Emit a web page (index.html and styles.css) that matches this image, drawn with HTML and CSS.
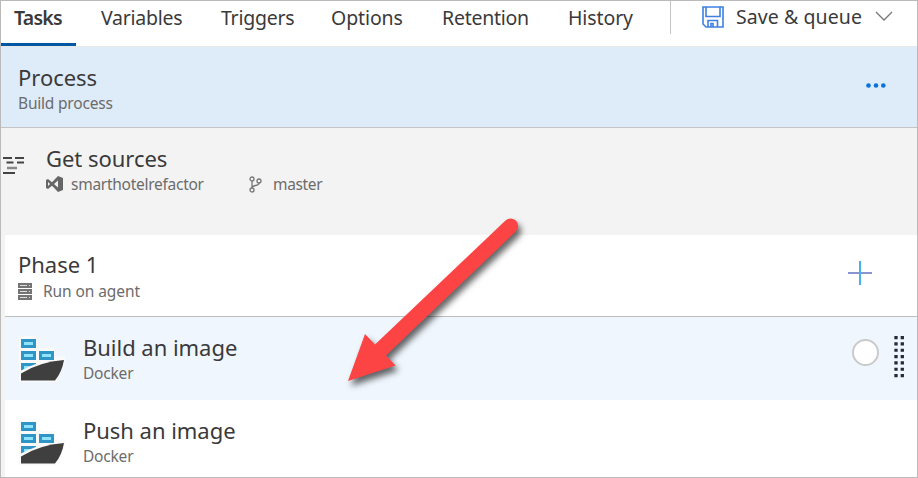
FILE: index.html
```html
<!DOCTYPE html>
<html lang="en">
<head>
<meta charset="utf-8">
<title>Build definition</title>
<link rel="stylesheet" href="styles.css">
</head>
<body>
<svg class="defs" width="0" height="0" aria-hidden="true">
  <symbol id="ship" viewBox="0 0 46 46">
    <path fill="#fafafa" d="M0 0H18V12H36V21L46 20V25L38 46H0Z"/>
    <path fill="#2f95c6" d="M2 3H17V12H2ZM2 15H17V24H2ZM20 15H35V24H20ZM2 27H17V31L2 35Z"/>
    <path fill="#8fe3fb" d="M5 6H14V9H5ZM5 18H14V21H5ZM23 18H32V21H23ZM5 30H14L5 33Z"/>
    <path fill="#fafafa" d="M2 37V34.500Q18 26 35 24V22.500H46V26H38L2 39Z"/>
    <path fill="#3f3f3f" d="M2 37.500Q20 26 45 24Q43 36 36 44.500H2Z"/>
  </symbol>
</svg>
<div class="panel">
  <header class="top">
    <nav class="tabs">
      <a class="tab active"><span>Tasks</span></a>
      <a class="tab"><span>Variables</span></a>
      <a class="tab"><span>Triggers</span></a>
      <a class="tab options"><span>Options</span></a>
      <a class="tab"><span>Retention</span></a>
      <a class="tab history"><span>History</span></a>
    </nav>
    <div class="save">
      <svg class="disk" viewBox="0 0 22 22"><path d="M1 1H21V21H4L1 18ZM4 1V10.500H18V1M6 21V14.500H15.500V21M9 21V17.500H11V21"/></svg>
      <span class="save-text">Save &amp; queue</span>
      <svg class="chevron" viewBox="0 0 18 11"><path d="M1 1L9 9L17 1"/></svg>
    </div>
  </header>

  <section class="process">
    <div>
      <h2>Process</h2>
      <p>Build process</p>
    </div>
    <svg class="dots" viewBox="0 0 20 5"><circle cx="2.500" cy="2.500" r="2.300"/><circle cx="10" cy="2.500" r="2.300"/><circle cx="17.300" cy="2.500" r="2.300"/></svg>
  </section>

  <section class="sources">
    <svg class="lines" viewBox="0 0 22 20"><path d="M0 2H9M12 2H21M3.500 6.500H10.500M14 6.500H21M0 17H12"/><path class="soft" d="M4 12H14"/></svg>
    <div>
      <h2>Get sources</h2>
      <div class="meta">
        <svg class="vs" viewBox="0 0 17 16"><path fill-rule="evenodd" d="M0 4L2 3L6 6.200L12 0L17 2V14L12 16L6 9.800L2 13L0 12ZM2 6V10L4 8ZM12 4.500L8 8L12 11.500Z"/></svg>
        <span class="repo">smarthotelrefactor</span>
        <svg class="branch" viewBox="0 0 13 17"><circle cx="3" cy="3" r="2"/><circle cx="10" cy="5" r="2"/><circle cx="3" cy="14" r="2"/><path d="M3 5V12M10 7C10 11 3 8 3 12"/></svg>
        <span class="master">master</span>
      </div>
    </div>
  </section>

  <section class="phase">
    <div>
      <h2>Phase 1</h2>
      <div class="meta">
        <svg class="server" viewBox="0 0 14 17"><path fill="#737373" d="M0 0H14V5H0ZM0 6H14V11H0ZM0 12H14V17H0Z"/><path fill="#ddd" d="M2 2H9V3H2ZM11 2H12V3H11ZM2 8H9V9H2ZM11 8H12V9H11ZM2 14H9V15H2ZM11 14H12V15H11Z"/></svg>
        <span class="agent">Run on agent</span>
      </div>
    </div>
    <svg class="plus" viewBox="0 0 24 24"><path stroke="#8a95d0" d="M0 12H24"/><path stroke="#45b3ea" d="M12 0V24"/></svg>
  </section>

  <section class="task selected">
    <svg class="ship"><use href="#ship"/></svg>
    <div class="task-text">
      <h2>Build an image</h2>
      <p>Docker</p>
    </div>
    <span class="radio"></span>
    <svg class="grip" viewBox="0 0 11 43"><path d="M2 0V42M8.300 0V42"/></svg>
  </section>

  <section class="task">
    <svg class="ship"><use href="#ship"/></svg>
    <div class="task-text">
      <h2>Push an image</h2>
      <p>Docker</p>
    </div>
  </section>
</div>
<svg class="arrow" viewBox="0 0 210 200"><path d="M18 181L35 134L45 144.500L175.500 20.500A7.500 7.500 0 0 1 185.800 31.500L56 155.500L65.500 165.500Z"/></svg>
</body>
</html>
```

FILE: styles.css
```css
* { box-sizing: border-box; }
body { margin: 0; font-family: "Noto Sans", "Open Sans", sans-serif; color: #3a3a3a; }
svg { display: block; flex: none; }
.defs { position: absolute; }
h2, p { margin: 0; font-weight: 400; white-space: nowrap; }
h2 { font-size: 22px; line-height: 30px; letter-spacing: -.03px; }
p, .meta { font-size: 15.500px; line-height: 22px; letter-spacing: -.2px; color: #6c6c6c; }
.meta { display: flex; align-items: center; }
.panel { width: 918px; height: 478px; border: 1px solid #bababa; background: #f3f3f3; overflow: hidden; }
.top { height: 46px; display: flex; background: #fff; border-bottom: 1px solid #e8e8e8; }
.tabs { display: grid; grid-template-columns: 87px 120px 110px 111px 126px 115px; width: 669px; }
.tab { font-size: 19.500px; line-height: 28px; padding: 3px 0 0 13px; letter-spacing: -.25px; white-space: nowrap; }
.tab.active { width: 75px; height: 45px; font-weight: 600; letter-spacing: -.75px; border-bottom: 3px solid #0058a3; }
.tab.options, .tab.history { letter-spacing: -.1px; }
.save { display: flex; align-items: center; height: 33px; border-left: 1px solid #c4c4c4; padding-left: 31px; white-space: nowrap; }
.save-text { font-size: 19.500px; line-height: 28px; letter-spacing: .08px; width: 126px; margin: -1px 13px 0 12px; }
.disk { width: 22px; height: 22px; margin-top: -2px; fill: none; stroke: #3d80e0; stroke-width: 1.600; }
.chevron { width: 18px; height: 11px; margin-top: -2px; fill: none; stroke: #777; stroke-width: 1.300; }
.process { height: 81px; background: #deebf8; border-bottom: 1px solid #c4c4c4; display: flex; justify-content: space-between; padding: 15px 31px 0 17px; }
.dots { width: 20px; height: 5px; margin-top: 21px; fill: #0873da; }
.sources { height: 107px; display: flex; padding: 15px 0 0 2px; }
.lines { width: 22px; height: 20px; margin: 13px 21px 0 0; stroke: #444; stroke-width: 1.800; }
.lines .soft { stroke: #888; stroke-width: 2.500; }
.vs { width: 17px; height: 16px; margin-right: 8px; fill: #666; }
.repo { width: 178px; letter-spacing: -.27px; }
.branch { width: 13px; height: 17px; margin-right: 11px; fill: none; stroke: #777; stroke-width: 1.300; }
.master { letter-spacing: -.35px; }
.agent { letter-spacing: -.08px; }
.phase { height: 82px; margin-left: 4px; background: #fff; border-bottom: 1px solid #bebebe; display: flex; justify-content: space-between; padding: 14px 45px 0 13px; }
.phase .meta { padding-top: 1px; }
.server { width: 14px; height: 17px; margin-right: 11px; }
.plus { width: 24px; height: 24px; margin-top: 12px; stroke-width: 2; }
.task { height: 83px; margin-left: 4px; background: #fff; display: flex; padding: 15px 0 0 14px; }
.task.selected { background: #eff6fd; }
.ship { width: 46px; height: 46px; margin-top: 4px; }
.task-text { width: 786px; margin-left: 18px; }
.radio { flex: none; width: 27px; height: 27px; margin: 7px 15px 0 -17px; border: 2px solid #cacaca; border-radius: 50%; background: #fff; }
.grip { width: 11px; height: 43px; margin-top: 4px; stroke: #222b38; stroke-width: 3.300; stroke-dasharray: 3.200 3.130; fill: none; }
.arrow { position: absolute; left: 330px; top: 200px; width: 210px; height: 200px; overflow: visible; fill: #fd4444; filter: drop-shadow(3px 5px 3px rgba(0, 0, 0, .6)); }
```
